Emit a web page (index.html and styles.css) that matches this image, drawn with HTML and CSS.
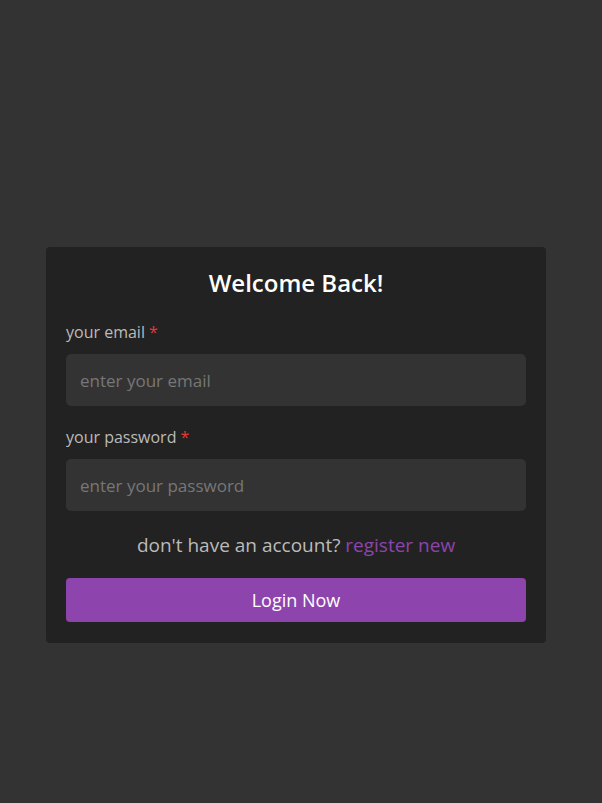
FILE: index.html
```html
<!DOCTYPE html>
<html>
  <head>
    <link rel="stylesheet" href="styles.css">
  </head>
  <body>
    <div class="wrapper">
      <form class="login-card">
        <h2 class="title">Welcome Back!</h2>

        <label for="email">your email <span class="req">*</span></label>
        <input type="email" id="email" name="email" placeholder="enter your email" autofocus />

        <label for="password">your password <span class="req">*</span></label>
        <input type="password" id="password" name="password" placeholder="enter your password" />

        <p class="switch">don't have an account? <a href="#">register new</a></p>

        <button type="submit" class="btn">Login Now</button>
      </form>
    </div>
  </body>
</html>
```

FILE: styles.css
```css
body {
  font-family: "Open Sans", "Noto Sans", sans-serif;
  margin: 0;
  padding: 0;
  background-color: #333333;
  min-height: 100vh;
}

.wrapper {
  display: flex;
  justify-content: center;
  padding-top: 247px;
  padding-right: 10px;
}

.login-card {
  width: 460px;
  background-color: #222222;
  border-radius: 4px;
  padding: 20px 20px 21px;
  display: flex;
  flex-direction: column;
}

.title {
  margin: 0 0 22px;
  text-align: center;
  color: #ffffff;
  font-size: 24px;
  font-weight: 600;
  line-height: 32px;
}

label {
  color: #bbbbbb;
  font-size: 16px;
  line-height: 22px;
  margin-bottom: 11px;
}

.req {
  color: #e53935;
}

input {
  height: 52px;
  box-sizing: border-box;
  border: none;
  outline: none;
  border-radius: 5px;
  background-color: #333333;
  color: #dddddd;
  padding: 0 14px;
  font-family: inherit;
  font-size: 17px;
  margin-bottom: 20px;
  caret-color: #ffffff;
}

input::placeholder {
  color: #777777;
}

.switch {
  margin: 1px 0 20px;
  text-align: center;
  color: #bbbbbb;
  font-size: 19px;
  line-height: 26px;
}

.switch a {
  color: #8e44ad;
  text-decoration: none;
}

.btn {
  height: 44px;
  border: none;
  border-radius: 4px;
  background-color: #8e44ad;
  color: #ffffff;
  font-family: inherit;
  font-size: 18px;
  cursor: pointer;
}
```
